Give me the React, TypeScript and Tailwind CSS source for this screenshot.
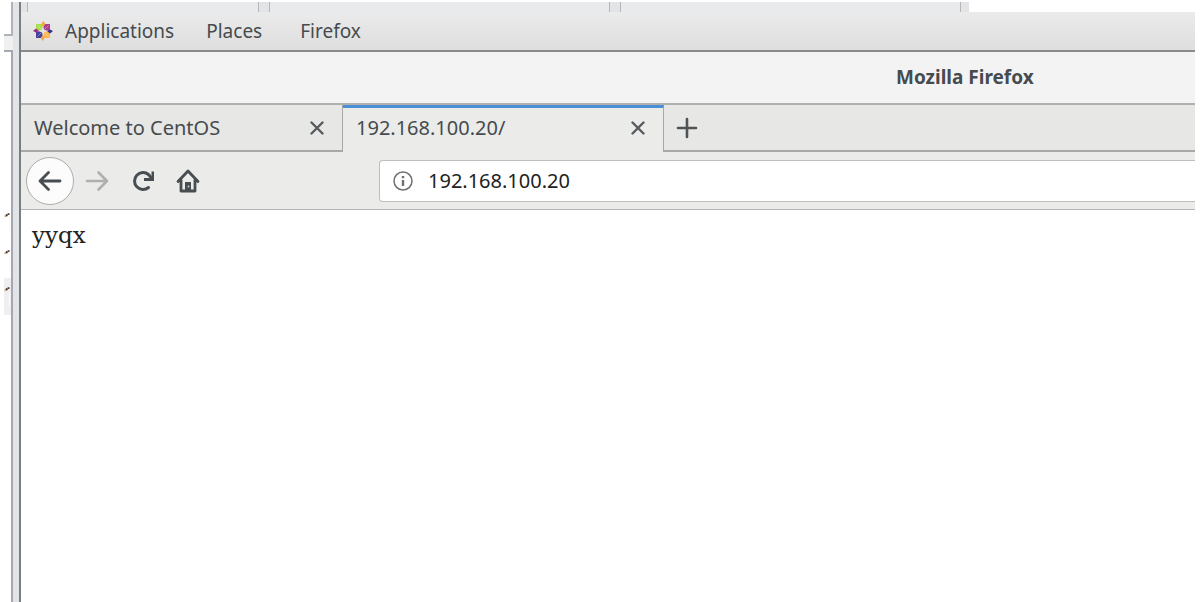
import React from "react";

function CloseIcon() {
  return (
    <svg width="14" height="14" viewBox="0 0 14 14" fill="none" stroke="#555b5e" strokeWidth="2.4" strokeLinecap="round">
      <path d="M1.5 1.5l11 11M12.5 1.5l-11 11" />
    </svg>
  );
}

function CentosIcon() {
  return (
    <svg width="20" height="20" viewBox="0 0 20 20">
      <path d="M3 3h6.500v6.500H3z" fill="#a6dd4a" />
      <path d="M10.500 3H17v6.500h-6.500z" fill="#a8408f" />
      <path d="M3 10.500h6.500V17H3z" fill="#45409a" />
      <path d="M10.500 10.500H17V17h-6.500z" fill="#fbb850" />
      <path d="M10 0l2.500 3L10 6 8.500 3z" fill="#f5a93a" />
      <path d="M20 10l-3 2.500L14 10l3-1.500z" fill="#35308c" />
      <path d="M10 20l-2.500-3L10 14l1.500 3z" fill="#f0a848" />
      <path d="M0 10l3-2.500L6 10l-3 1.500z" fill="#9c2c86" />
      <path d="M4.500 4.500l11 11M15.500 4.500l-11 11" stroke="#fff" strokeOpacity="0.35" strokeWidth="1" />
      <path d="M10 7v6M7 10h6" stroke="#e8e8e8" strokeWidth="1.4" />
    </svg>
  );
}

function Prompt({ shaded }: { shaded?: boolean }) {
  return (
    <div className={shaded ? "h-[37px] bg-[#efefef]" : "h-[37px]"}>
      <svg width="7" height="37" viewBox="0 0 7 37">
        <path d="M5.5 14v14" stroke="#fffde8" strokeWidth="1" />
        <path d="M0.5 12.5l2-1" stroke="#e0a060" strokeWidth="1.8" />
        <path d="M2 11.5l1.5-0.5" stroke="#3a2c20" strokeWidth="2" />
        <path d="M3.5 10.500l2-0.8" stroke="#453a4c" strokeWidth="1.6" />
      </svg>
    </div>
  );
}

function HostTab({ width }: { width: string }) {
  return <div className={`${width} h-[10px] shrink-0 border-x border-[#b4b6b9] bg-[#e9eaec]`} />;
}

export default function App() {
  return (
    <div className="flex min-h-screen bg-white pt-[2px] pr-[6px] pl-1 font-['Noto_Sans',sans-serif] text-[#454b4e]">
      <aside className="flex w-[9px] shrink-0 flex-col">
        <div className="h-[34px] border-r-2 border-b-2 border-[#b0b3b7]" />
        <div className="h-[14px] bg-[#f0f0f0]" />
        <div className="flex-1 border-t-2 border-r-2 border-[#a5a8b0] pt-[152px]">
          <Prompt />
          <Prompt />
          <Prompt shaded />
        </div>
      </aside>
      <div className="w-[6px] shrink-0 bg-[#e3e4e7]" />
      <div className="flex min-w-0 flex-1 flex-col border-l-2 border-[#7b7e81]">
        <div className="flex h-[10px] w-[948px] bg-[#e3e4e6] pl-[6px]">
          <HostTab width="w-[232px]" />
          <div className="w-[10px]" />
          <HostTab width="w-[341px]" />
          <div className="w-[10px]" />
          <HostTab width="w-[341px]" />
        </div>
        <nav className="flex h-10 items-center border-b-2 border-[#8a8a8a] bg-linear-to-b from-[#ebebeb] to-[#dedede] pl-3 text-[19px]">
          <button className="flex items-center gap-3">
            <CentosIcon />
            Applications
          </button>
          <button className="ml-8">Places</button>
          <button className="ml-[38px]">Firefox</button>
        </nav>
        <header className="flex h-[53px] items-center border-b-2 border-[#b0b0ae] bg-[#f3f3f3] pl-[875px]">
          <h1 className="text-[19px] font-bold whitespace-nowrap">Mozilla Firefox</h1>
        </header>
        <div className="flex h-[47px] bg-[#e7e7e5] text-[20px]">
          <div className="flex w-[322px] items-center justify-between border-r border-b-2 border-[#a8a8a6] pr-[18px] pl-[13px]">
            <span>Welcome to CentOS</span>
            <button aria-label="Close Welcome to CentOS"><CloseIcon /></button>
          </div>
          <div className="flex w-[321px] items-center justify-between border-t-[3px] border-r border-t-[#4a90d9] border-r-[#a8a8a6] bg-[#ebebea] pr-[18px] pb-1 pl-[13px]">
            <span>192.168.100.20/</span>
            <button aria-label="Close 192.168.100.20"><CloseIcon /></button>
          </div>
          <div className="flex flex-1 items-center border-b-2 border-[#a8a8a6] pl-3">
            <button aria-label="New tab">
              <svg width="22" height="22" viewBox="0 0 22 22" fill="none" stroke="#4d5356" strokeWidth="2.6" strokeLinecap="round">
                <path d="M11 2v18M2 11h18" />
              </svg>
            </button>
          </div>
        </div>
        <div className="flex h-[58px] items-center border-b border-[#b5b5b5] bg-[#ebebea] pl-[5px]">
          <button aria-label="Back" className="flex size-12 items-center justify-center rounded-full border border-[#adadad] bg-[#fcfcfc]">
            <svg width="24" height="24" viewBox="0 0 24 24" fill="none" stroke="#474d50" strokeWidth="2.8" strokeLinecap="round" strokeLinejoin="round">
              <path d="M22 12H2M10.5 3.5L2 12l8.5 8.5" />
            </svg>
          </button>
          <button aria-label="Forward" className="ml-[11px]">
            <svg width="24" height="24" viewBox="0 0 24 24" fill="none" stroke="#aeb0b0" strokeWidth="2.6" strokeLinecap="round" strokeLinejoin="round">
              <path d="M2 12h20M13.5 3.5L22 12l-8.5 8.5" />
            </svg>
          </button>
          <button aria-label="Reload" className="ml-[22px]">
            <svg width="24" height="24" viewBox="0 0 24 24" fill="none" stroke="#474d50" strokeWidth="3">
              <path d="M17.5 18.5A8.5 8.5 0 1 1 17.5 5.5L20 8.5" strokeLinecap="round" />
              <path d="M20.5 2.5h2.500V12H13V9h7.500z" fill="#474d50" stroke="none" />
            </svg>
          </button>
          <button aria-label="Home" className="ml-[21px]">
            <svg width="24" height="24" viewBox="0 0 24 24" fill="none" stroke="#474d50" strokeWidth="2.8" strokeLinecap="round" strokeLinejoin="round">
              <path d="M2 12.500L12 2l10 10.500M5 11v11h14V11" />
              <path d="M9 22v-9h6v9z" fill="#474d50" stroke="none" />
              <circle cx="12.5" cy="17.5" r="1" fill="#c8caca" stroke="none" />
            </svg>
          </button>
          <label className="ml-[179px] flex h-[42px] flex-1 items-center gap-[15px] rounded-l border border-r-0 border-[#bfbfbf] bg-white pl-[13px]">
            <svg width="20" height="20" viewBox="0 0 20 20" fill="none" stroke="#707070">
              <circle cx="10" cy="10" r="9" strokeWidth="1.5" />
              <path d="M10 9v6M10 5v2.2" strokeWidth="2.4" />
            </svg>
            <input aria-label="Address" defaultValue="192.168.100.20" className="min-w-0 flex-1 text-[20px] text-[#222] outline-none" />
          </label>
        </div>
        <main className="flex-1 px-[11px] pt-[11px] font-['DejaVu_Serif',serif] text-[23px] leading-7 text-[#222]">yyqx</main>
      </div>
    </div>
  );
}
